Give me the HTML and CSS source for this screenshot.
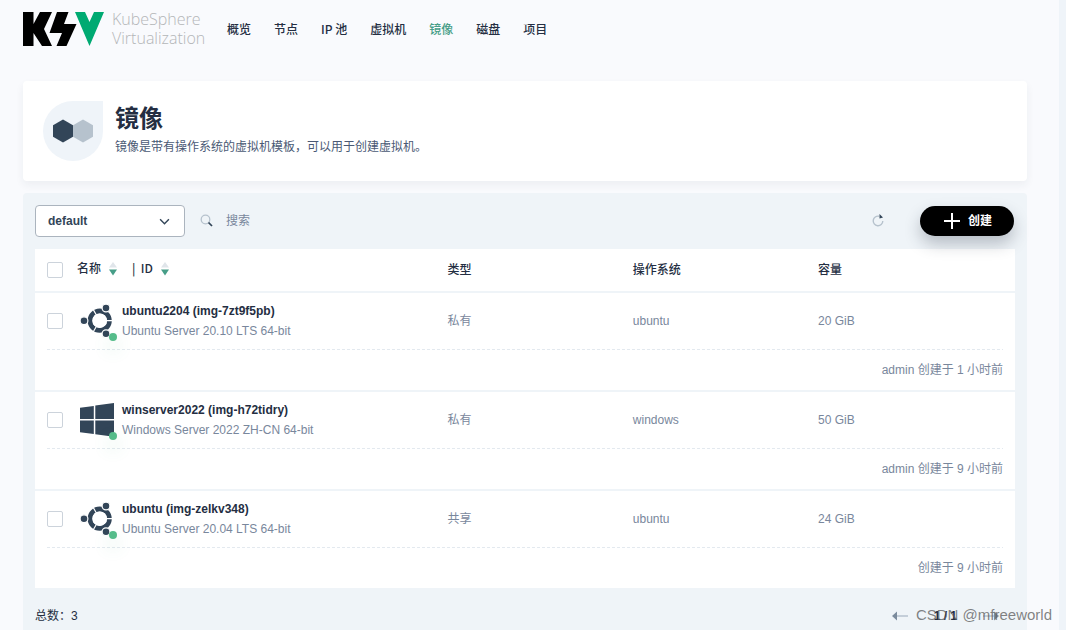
FILE: index.html
```html
<!DOCTYPE html>
<html lang="zh-CN">
<head>
<meta charset="utf-8">
<title>KubeSphere Virtualization</title>
<link rel="stylesheet" href="styles.css">
</head>
<body>
<svg class="defs" aria-hidden="true">
  <symbol id="ubuntu" viewBox="0 0 40 40">
    <circle cx="22.700" cy="19.700" r="9.700" fill="none" stroke="#324558" stroke-width="4.800"/>
    <path d="M22.700 19.700H36M22.700 19.700L15.700 7.600M22.700 19.700L15.700 31.800" stroke="#fff" stroke-width="1.200"/>
    <circle cx="22.700" cy="19.700" r="7.300" fill="#fff"/>
    <g fill="#324558" stroke="#fff" stroke-width="1.200">
      <circle cx="7" cy="19.700" r="3.900"/><circle cx="29" cy="7" r="3.900"/><circle cx="29" cy="32.700" r="3.900"/>
    </g>
  </symbol>
  <symbol id="windows" viewBox="0 0 40 40">
    <path fill="#324558" d="M3 7.800L16.800 5.900V18.900H3zM18.300 5.600L37 3V18.900H18.300zM3 20.600H16.800V34L3 32.200zM18.300 20.600H37V36.800L18.300 34.200z"/>
  </symbol>
  <symbol id="sort" viewBox="0 0 8 14">
    <path fill="#e0e5ea" d="M4 0L8 5.500H0z"/><path fill="#479e88" d="M0 7.500H8L4 13.500z"/>
  </symbol>
  <symbol id="arrow" viewBox="0 0 16 10">
    <path fill="#c4ced9" d="M4 4h12v2H4z"/><path fill="#7b8b9d" d="M0 5l5-4.500v9z"/>
  </symbol>
</svg>

<header class="topbar">
  <a class="brand" href="#">
    <svg class="brand-mark" viewBox="0 0 81 34" aria-hidden="true">
      <path d="M0 0H10.500V12L17 0H29L21 17L29 34H19L10.500 21V34H0zM34 0H45.500L41 12H53.500L43.500 34H33.500L39 21H26.500z"/>
      <path fill="#00aa72" d="M52 0H62L66.500 10L71 0H81L66.500 34z"/>
    </svg>
    <span class="brand-name">KubeSphere<br>Virtualization</span>
  </a>
  <nav class="nav">
    <a href="#">概览</a><a href="#">节点</a><a href="#">IP 池</a><a href="#">虚拟机</a><a class="active" href="#">镜像</a><a href="#">磁盘</a><a href="#">项目</a>
  </nav>
</header>

<main class="content">
  <section class="banner">
    <div class="banner-icon">
      <svg viewBox="0 0 40 24" aria-hidden="true"><path fill="#324558" d="M10 0.500L20 6.300V17.700L10 23.500L0 17.700V6.300z"/><path fill="#b6c2cd" d="M30 0.500L40 6.300V17.700L30 23.500L20 17.700V6.300z"/></svg>
    </div>
    <div>
      <h1>镜像</h1>
      <p>镜像是带有操作系统的虚拟机模板，可以用于创建虚拟机。</p>
    </div>
  </section>

  <section class="panel">
    <div class="toolbar">
      <div class="picker">
        <select aria-label="项目"><option>default</option></select>
        <svg viewBox="0 0 10 6" aria-hidden="true"><path d="M1 1l4 4 4-4" fill="none" stroke="#324558" stroke-width="1.300"/></svg>
      </div>
      <label class="search">
        <svg viewBox="0 0 14 14" aria-hidden="true"><circle cx="5.500" cy="5.500" r="4.300" fill="none" stroke="#b6c2cd" stroke-width="1.300"/><path d="M8.500 8.500l3.500 3.500" stroke="#324558" stroke-width="1.700"/></svg>
        <input type="text" placeholder="搜索" aria-label="搜索">
      </label>
      <button class="refresh" type="button" aria-label="刷新">
        <svg viewBox="0 0 12 14" aria-hidden="true"><path d="M7 2.200A4.800 4.800 0 1 0 10.800 7" fill="none" stroke="#b6c2cd" stroke-width="1.400"/><path fill="#324558" d="M7.500 0L11 3.400L7.500 4.600z"/></svg>
      </button>
      <button class="create" type="button">
        <svg viewBox="0 0 16 16" aria-hidden="true"><path d="M8 0v16M0 8h16" stroke="#fff" stroke-width="2"/></svg>创建
      </button>
    </div>

    <table class="images">
      <colgroup><col class="col-check"><col><col class="col-mid"><col class="col-mid"><col class="col-size"></colgroup>
      <thead>
        <tr>
          <th><input type="checkbox" aria-label="全选"></th>
          <th><div class="sorts"><span>名称</span><svg><use href="#sort"/></svg><span class="sort-id">| &nbsp;ID</span><svg><use href="#sort"/></svg></div></th>
          <th>类型</th><th>操作系统</th><th>容量</th>
        </tr>
      </thead>
      <tbody>
        <tr class="main">
          <td><input type="checkbox" aria-label="选择 ubuntu2204"></td>
          <td><div class="image"><span class="os"><svg><use href="#ubuntu"/></svg><i class="dot"></i></span><div><a href="#">ubuntu2204 (img-7zt9f5pb)</a><p>Ubuntu Server 20.10 LTS 64-bit</p></div></div></td>
          <td>私有</td><td>ubuntu</td><td>20 GiB</td>
        </tr>
        <tr class="meta"><td colspan="5"><div>admin 创建于 1 小时前</div></td></tr>
      </tbody>
      <tbody>
        <tr class="main">
          <td><input type="checkbox" aria-label="选择 winserver2022"></td>
          <td><div class="image"><span class="os"><svg><use href="#windows"/></svg><i class="dot"></i></span><div><a href="#">winserver2022 (img-h72tidry)</a><p>Windows Server 2022 ZH-CN 64-bit</p></div></div></td>
          <td>私有</td><td>windows</td><td>50 GiB</td>
        </tr>
        <tr class="meta"><td colspan="5"><div>admin 创建于 9 小时前</div></td></tr>
      </tbody>
      <tbody>
        <tr class="main">
          <td><input type="checkbox" aria-label="选择 ubuntu"></td>
          <td><div class="image"><span class="os"><svg><use href="#ubuntu"/></svg><i class="dot"></i></span><div><a href="#">ubuntu (img-zelkv348)</a><p>Ubuntu Server 20.04 LTS 64-bit</p></div></div></td>
          <td>共享</td><td>ubuntu</td><td>24 GiB</td>
        </tr>
        <tr class="meta"><td colspan="5"><div>创建于 9 小时前</div></td></tr>
      </tbody>
    </table>

    <footer class="pager">
      <span>总数：3</span>
      <div class="pages">
        <button type="button" aria-label="上一页"><svg><use href="#arrow"/></svg></button>
        <span>1 / 1</span>
        <button class="next" type="button" aria-label="下一页"><svg><use href="#arrow"/></svg></button>
      </div>
    </footer>
  </section>
</main>
<div class="watermark">CSDN @mfreeworld</div>
</body>
</html>
```
FILE: styles.css
```css
* { box-sizing: border-box; }
html { height: 100%; overflow: hidden; }
body {
  margin: 0;
  min-height: 100%;
  background: #f9fafd;
  border-right: 7px solid #eff4f9;
  color: #242e42;
  font: 12px/20px "Liberation Sans", "Noto Sans CJK SC", sans-serif;
}
h1, p { margin: 0; }
a { color: inherit; text-decoration: none; }
button { border: 0; padding: 0; background: none; font: inherit; }
.defs { position: absolute; width: 0; height: 0; }

.topbar { display: flex; align-items: center; height: 58px; padding: 0 23px; }
.brand { display: flex; align-items: center; gap: 8px; }
.brand-mark { width: 81px; height: 34px; }
.brand-name { width: 94px; font: 300 16px/19px "Open Sans", sans-serif; color: #b4b6b8; }
.nav { display: flex; gap: 23px; margin-left: 21px; font-family: "Noto Sans CJK SC", sans-serif; font-weight: 500; }
.nav .active { color: #479e88; }

.content { padding: 23px 32px 0 23px; }
.banner {
  display: flex;
  gap: 12px;
  height: 100px;
  padding: 20px;
  background: #fff;
  border-radius: 4px;
  box-shadow: 0 4px 8px rgba(36, 46, 66, 0.06);
}
.banner-icon {
  display: grid;
  place-items: center;
  width: 60px;
  height: 60px;
  border-radius: 50% 0 50% 50%;
  background: #eff4f9;
}
.banner-icon svg { width: 40px; height: 24px; }
h1 { margin-bottom: 4px; font: 700 24px/32px "Noto Sans CJK SC", sans-serif; }
.banner p { color: #4a5974; }

.panel { margin-top: 12px; padding: 12px; border-radius: 4px; background: #eff4f8; }
.toolbar { display: flex; align-items: center; height: 32px; margin-bottom: 12px; }
.picker { position: relative; width: 150px; }
.picker select {
  appearance: none;
  width: 100%;
  height: 32px;
  padding: 0 12px;
  border: 1px solid #abb4be;
  border-radius: 4px;
  background: #fff;
  color: #324558;
  font: 700 12px/20px "Liberation Sans", sans-serif;
}
.picker svg { position: absolute; right: 15px; top: 13px; width: 11px; height: 7px; }
.search { display: flex; align-items: center; gap: 12px; flex: 1; margin-left: 15px; }
.search svg { width: 14px; height: 14px; }
.search input { flex: 1; border: 0; padding: 0; background: none; outline: 0; font: inherit; }
.search input::placeholder { color: #79879c; opacity: 1; }
.refresh svg { display: block; width: 12px; height: 14px; }
.create {
  display: flex;
  align-items: center;
  justify-content: center;
  gap: 8px;
  width: 94px;
  height: 30px;
  margin: 0 1px 0 36px;
  padding-left: 2px;
  border-radius: 15px;
  background: #000;
  color: #fff;
  font-weight: 700;
  box-shadow: 0 8px 16px rgba(35, 45, 65, 0.28);
}
.create svg { width: 16px; height: 16px; }

.images { width: 100%; table-layout: fixed; border-spacing: 0; background: #fff; }
.col-check { width: 42px; }
.col-mid { width: 18.9%; }
.col-size { width: 20.1%; }
th, td { padding: 0; text-align: left; }
th { height: 42px; padding-bottom: 2px; font-weight: 500; font-family: "Noto Sans CJK SC", sans-serif; }
td { color: #79879c; }
th:first-child { padding: 0 0 0 12px; }
.main td:first-child { padding-left: 12px; }
input[type="checkbox"] {
  appearance: none;
  display: block;
  width: 16px;
  height: 16px;
  margin: 0;
  border: 1px solid #ccd3db;
  border-radius: 2px;
  background: #fff;
}
.sorts { display: flex; align-items: center; padding-bottom: 2px; }
.sorts svg { width: 8px; height: 14px; margin: 2px 0 0 8px; }
.sort-id { margin-left: 15px; }
.main td { height: 58px; border-top: 2px solid #eff4f8; }
.image { display: flex; align-items: center; gap: 5px; }
.os { position: relative; width: 40px; height: 40px; }
.os svg { display: block; width: 40px; height: 40px; }
.dot {
  position: absolute;
  right: 0;
  bottom: 0;
  width: 8px;
  height: 8px;
  border-radius: 50%;
  background: #55bc8a;
  box-shadow: 0 8px 16px rgba(85, 188, 138, 0.3);
}
.image a { color: #242e42; font-weight: 700; }
.meta td { padding: 0 12px; }
.meta div { height: 41px; padding-top: 11px; text-align: right; background: repeating-linear-gradient(90deg, #e3e9ef 0 3px, transparent 3px 5px) top / 100% 1px no-repeat; }

.pager { display: flex; justify-content: space-between; align-items: center; padding: 18px 16px 6px 0; }
.pages { display: flex; align-items: center; gap: 26px; font-weight: 700; }
.pages svg { display: block; width: 16px; height: 10px; }
.next { transform: rotate(180deg); }
.watermark {
  position: absolute;
  right: 14px;
  bottom: 5px;
  font-size: 15px;
  color: rgba(90, 90, 90, 0.75);
}
```
